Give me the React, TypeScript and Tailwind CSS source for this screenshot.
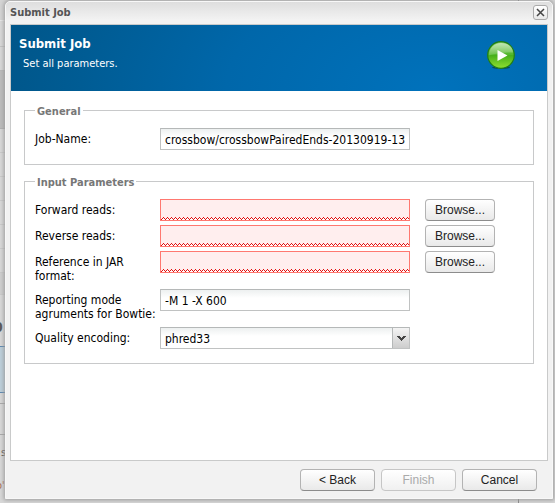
import type { InputHTMLAttributes, ButtonHTMLAttributes, ReactNode } from 'react';

const sans = "font-['DejaVu_Sans_Condensed','DejaVu_Sans',sans-serif]";

function PushButton({ className = '', ...rest }: ButtonHTMLAttributes<HTMLButtonElement>) {
  return (
    <button
      type="button"
      className={`h-[22px] shrink-0 rounded-[4px] border border-[#b3b3b3] border-b-[#8c8c8c] bg-linear-to-b from-white to-[#e9e9e9] text-center font-['Liberation_Sans',Arial,sans-serif] text-xs leading-5 text-[#222] disabled:border-[#c6c6c6] disabled:to-[#f0f0f0] disabled:text-[#aaa] ${className}`}
      {...rest}
    />
  );
}

function TextBox(props: InputHTMLAttributes<HTMLInputElement>) {
  return (
    <input
      type="text"
      className="block h-[22px] w-[250px] border border-[#c0c2c2] border-t-[#b5b8b8] bg-linear-to-b from-[#edf0f0] to-white to-40% px-1 pt-0.5 text-xs text-black outline-none"
      {...props}
    />
  );
}

function InvalidBox({ id }: { id: string }) {
  return (
    <div className="relative w-[250px]">
      <input
        id={id}
        type="text"
        aria-invalid="true"
        className="block h-[22px] w-full border border-[#ff7870] bg-[#ffeeee] px-1 text-xs outline-none"
      />
      <svg className="pointer-events-none absolute bottom-px left-px h-[3px] w-[248px]" shapeRendering="crispEdges">
        <defs>
          <pattern id={`${id}-wave`} width="4" height="3" patternUnits="userSpaceOnUse">
            <path d="M0 3V2h1V1h1V0h1v1h1v2z" fill="#fff" />
            <path d="M0 2h1v1H0zM1 1h1v1H1zM2 0h1v1H2zM3 1h1v1H3z" fill="#e01010" />
          </pattern>
        </defs>
        <rect width="248" height="3" fill={`url(#${id}-wave)`} />
      </svg>
    </div>
  );
}

function Row({ id, label, children }: { id: string; label: string; children: ReactNode }) {
  return (
    <div className="mb-1 flex items-start">
      <label htmlFor={id} className="w-[125px] shrink-0 pt-1 pb-0.5 text-xs leading-[14px] text-black">
        {label}
      </label>
      {children}
    </div>
  );
}

function Group({ title, children }: { title: string; children: ReactNode }) {
  return (
    <fieldset className="border border-[#c8c9ca] px-2.5 pt-2.5 pb-2.5">
      <legend className="px-0.5 pt-0.5 text-[11px] leading-[13px] font-bold text-[#777]">{title}</legend>
      {children}
    </fieldset>
  );
}

function PlayIcon() {
  return (
    <svg className="mt-4 mr-8 size-7" viewBox="0 0 28 28" aria-hidden="true">
      <defs>
        <linearGradient id="ball" x1="0" y1="0" x2="0" y2="1">
          <stop offset="0" stopColor="#7cc85c" />
          <stop offset="0.48" stopColor="#54b82e" />
          <stop offset="0.52" stopColor="#48b01c" />
          <stop offset="1" stopColor="#90e030" />
        </linearGradient>
        <linearGradient id="gloss" x1="0" y1="0" x2="0" y2="1">
          <stop offset="0" stopColor="#fff" stopOpacity="0.55" />
          <stop offset="1" stopColor="#fff" stopOpacity="0.12" />
        </linearGradient>
      </defs>
      <ellipse cx="14" cy="26.5" rx="9" ry="1.5" fill="#064a5e" />
      <circle cx="14" cy="14" r="13.3" fill="url(#ball)" stroke="#1f7d16" strokeWidth="1.2" />
      <path d="M2 14.5C2 7 7 2 14 2s12 4 12 9.5C20 11.5 9 12 2 14.5Z" fill="url(#gloss)" />
      <path d="M10.5 9v11l10-5.5Z" fill="#fff" />
    </svg>
  );
}

function Backdrop() {
  return (
    <div aria-hidden="true" className="absolute inset-0 flex justify-between overflow-hidden bg-[#d8d8d8] text-[#555]">
      <div className="flex w-8 flex-col">
        <div className="h-[21px] border-b border-[#e8e8e8] bg-[#d4d4d4]" />
        <div className="h-[26px] border-b border-[#c2c2c2]" />
        <div className="h-[24px] border-b border-[#b8b8b8]" />
        <div className="h-[58px] border-b border-[#b0b0b0] bg-[#bcbcbc]" />
        <div className="h-6 border-b border-[#cacaca]" />
        <div className="h-6 border-b border-[#cacaca]" />
        <div className="h-6 border-b border-[#cacaca]" />
        <div className="h-6 border-b border-[#cacaca]" />
        <div className="h-6 border-b border-[#cacaca]" />
        <div className="h-6 border-b border-[#cacaca]" />
        <div className="h-[22px] border-b border-[#cacaca] bg-[#cfcfcf]" />
        <div className="-ml-1.5 h-[51px] pt-6 text-sm leading-4 font-bold">0</div>
        <div className="h-[47px] border-y border-[#5b87b0] bg-[#bccfdb]" />
        <div className="h-[11px] border-b border-[#a8a8a8]" />
        <div className="h-[31px] border-b border-[#a8a8a8]" />
        <div className="h-[33px] pt-3 pl-px text-[11px] leading-3">s</div>
        <div className="-ml-1 pt-3 text-[11px] leading-3 text-[#a86a4c]">o'</div>
      </div>
      <div className="w-[37px] border-l border-[#888]" />
    </div>
  );
}

export default function App() {
  return (
    <div className={`relative flex min-h-screen ${sans}`}>
      <Backdrop />
      <section
        role="dialog"
        aria-labelledby="window-title"
        className="relative mt-px mr-[2px] mb-1 ml-[5px] flex flex-1 flex-col rounded-t-[5px] border border-[#f8f8f8] bg-[#f2f2f2] px-1 shadow-[0_0_4px_1px_#999]"
      >
        <header className="-mx-1 flex h-[22px] items-start justify-between rounded-t-[4px] bg-linear-to-b from-[#dedede] to-[#f2f2f2] to-80% pr-1 pl-1">
          <h1 id="window-title" className="pt-1 text-[11px] leading-[14px] font-bold text-[#555]">
            Submit Job
          </h1>
          <button
            type="button"
            aria-label="Close"
            className="mt-[3px] flex size-[15px] items-center justify-center rounded-[3px] border border-[#aaa] bg-linear-to-b from-white to-[#e8e8e8]"
          >
            <svg className="size-[9px]" viewBox="0 0 9 9" aria-hidden="true">
              <path d="M1 1l7 7M8 1L1 8" stroke="#444" strokeWidth="1.5" />
            </svg>
          </button>
        </header>

        <div className="flex flex-1 flex-col border border-[#c9caca] bg-white">
          <div className="flex h-[66px] justify-between bg-[radial-gradient(ellipse_520px_300px_at_79%_100%,#0072bc_0%,#0067aa_40%,#005c94_68%,#00507f_100%)] text-white">
            <div className="pt-[11px] pl-2">
              <h2 className="text-[13px] leading-4 font-bold">Submit Job</h2>
              <p className="mt-1 pl-1 text-[11px] leading-4">Set all parameters.</p>
            </div>
            <PlayIcon />
          </div>

          <form className="flex flex-col gap-[9px] px-[13px] pt-3">
            <Group title="General">
              <Row id="job" label="Job-Name:">
                <TextBox id="job" defaultValue="crossbow/crossbowPairedEnds-20130919-13" />
              </Row>
            </Group>
            <Group title="Input Parameters">
              <Row id="forward" label="Forward reads:">
                <InvalidBox id="forward" />
                <PushButton className="ml-[15px] w-[70px]">Browse...</PushButton>
              </Row>
              <Row id="reverse" label="Reverse reads:">
                <InvalidBox id="reverse" />
                <PushButton className="ml-[15px] w-[70px]">Browse...</PushButton>
              </Row>
              <Row id="reference" label="Reference in JAR format:">
                <InvalidBox id="reference" />
                <PushButton className="ml-[15px] w-[70px]">Browse...</PushButton>
              </Row>
              <Row id="bowtie" label="Reporting mode agruments for Bowtie:">
                <TextBox id="bowtie" defaultValue="-M 1 -X 600" />
              </Row>
              <Row id="quality" label="Quality encoding:">
                <div className="relative w-[250px]">
                  <select
                    id="quality"
                    className="block h-[22px] w-full appearance-none border border-[#c0c2c2] border-t-[#b5b8b8] bg-linear-to-b from-[#edf0f0] to-white to-40% px-1 pt-0.5 text-xs text-black outline-none"
                  >
                    <option>phred33</option>
                  </select>
                  <span className="pointer-events-none absolute top-px right-px bottom-px flex w-[17px] items-center justify-center border-l border-[#b5b8b8] bg-linear-to-b from-[#f4f4f4] to-[#cdcdcd]">
                    <svg className="size-[9px]" viewBox="0 0 9 9" shapeRendering="crispEdges" aria-hidden="true">
                      <path d="M0 2h3v1h1v1h1V3h1V2h3v1H8v1H7v1H6v1H5v1H4V6H3V5H2V4H1V3H0z" fill="#444" />
                    </svg>
                  </span>
                </div>
              </Row>
            </Group>
          </form>
        </div>

        <footer className="flex justify-end gap-1.5 pt-2 pr-[11px] pb-[7px]">
          <PushButton className="w-[75px]">&lt; Back</PushButton>
          <PushButton className="w-[75px]" disabled>
            Finish
          </PushButton>
          <PushButton className="w-[75px]">Cancel</PushButton>
        </footer>
      </section>
    </div>
  );
}
